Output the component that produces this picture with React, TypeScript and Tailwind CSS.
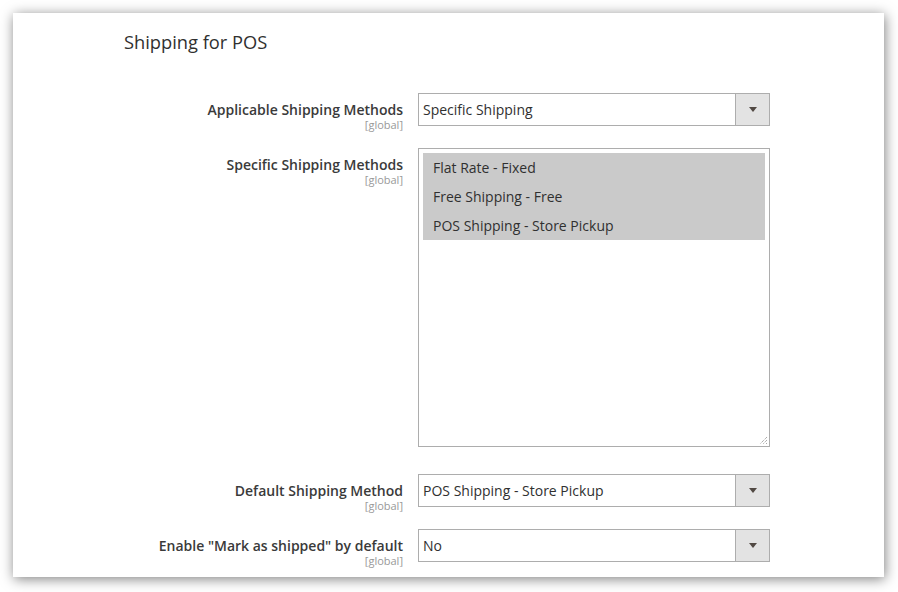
import React from "react";

const font = { fontFamily: '"Open Sans", "Liberation Sans", sans-serif' };

function Arrow() {
  return (
    <div className="w-[34px] h-full bg-[#e3e3e3] border-l border-[#adadad] flex items-center justify-center">
      <svg width="8" height="5" viewBox="0 0 8 5">
        <path d="M0 0H8L4 5Z" fill="#514943" />
      </svg>
    </div>
  );
}

function Label({ text }: { text: string }) {
  return (
    <div className="w-[405px] shrink-0 pr-[15px] pt-[8px] text-right">
      <div className="text-[14px] leading-[18px] font-semibold text-[#3a3a3a]">{text}</div>
      <div className="text-[11px] leading-[12px] text-[#999999]">[global]</div>
    </div>
  );
}

function Select({ value }: { value: string }) {
  return (
    <div className="w-[352px] h-[33px] border border-[#adadad] bg-white flex items-stretch">
      <div className="flex-1 flex items-center pl-[4px] text-[14px] text-[#303030]">{value}</div>
      <Arrow />
    </div>
  );
}

export default function App() {
  const options = ["Flat Rate - Fixed", "Free Shipping - Free", "POS Shipping - Store Pickup"];
  return (
    <div className="w-[898px] h-[592px] bg-white pt-[13px] pl-[13px]" style={font}>
      <div className="w-[871px] h-[564px] bg-white shadow-[1px_2px_12px_rgba(0,0,0,0.5)] pt-[17px]">
        <div className="pl-[111px] text-[18.3px] leading-[24px] font-medium text-[#303030]">Shipping for POS</div>
        <div className="mt-[39px] flex">
          <Label text="Applicable Shipping Methods" />
          <Select value="Specific Shipping" />
        </div>
        <div className="mt-[17px] flex">
          <Label text="Specific Shipping Methods" />
          <div className="relative w-[352px] h-[299px] border border-[#adadad] bg-white p-[4px]">
            {options.map((o) => (
              <div key={o} className="h-[29px] bg-[#cacaca] flex items-center pl-[10px] text-[14px] text-[#303030]">
                {o}
              </div>
            ))}
            <svg className="absolute right-[1px] bottom-[1px]" width="9" height="9" viewBox="0 0 9 9">
              <path d="M8 1L1 8M8 4L4 8M8 7L7 8" stroke="#888" strokeWidth="1" strokeDasharray="1 1" />
            </svg>
          </div>
        </div>
        <div className="mt-[27px] flex">
          <Label text="Default Shipping Method" />
          <Select value="POS Shipping - Store Pickup" />
        </div>
        <div className="mt-[17px] flex">
          <Label text={'Enable "Mark as shipped" by default'} />
          <Select value="No" />
        </div>
      </div>
    </div>
  );
}
